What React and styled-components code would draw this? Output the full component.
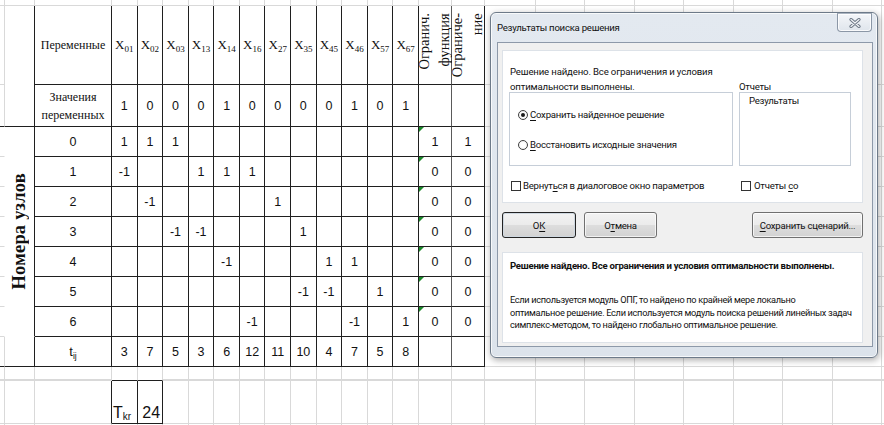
import React from 'react';
import styled, { createGlobalStyle, css } from 'styled-components';

const GRID = '#d9d9d9';
const DARK = '#1f1f1f';
const MID = '#5a5a5a';

const VARS = ['01', '02', '03', '13', '14', '16', '27', '35', '45', '46', '57', '67'];
const VALUES = [1, 0, 0, 0, 1, 0, 0, 0, 0, 1, 0, 1];
const TIMES = [3, 7, 5, 3, 6, 12, 11, 10, 4, 7, 5, 8];
const NODES = [
  { id: 0, coef: { '01': 1, '02': 1, '03': 1 }, fn: 1, limit: 1 },
  { id: 1, coef: { '01': -1, '13': 1, '14': 1, '16': 1 }, fn: 0, limit: 0 },
  { id: 2, coef: { '02': -1, '27': 1 }, fn: 0, limit: 0 },
  { id: 3, coef: { '03': -1, '13': -1, '35': 1 }, fn: 0, limit: 0 },
  { id: 4, coef: { '14': -1, '45': 1, '46': 1 }, fn: 0, limit: 0 },
  { id: 5, coef: { '35': -1, '45': -1, '57': 1 }, fn: 0, limit: 0 },
  { id: 6, coef: { '16': -1, '46': -1, '67': 1 }, fn: 0, limit: 0 },
];
const TAIL_COLUMNS = 9;
const ALL_COLUMNS = 3 + VARS.length + 2 + TAIL_COLUMNS;

const GlobalStyle = createGlobalStyle`
  html, body { margin: 0; padding: 0; background: #ffffff; }
  #root { width: 884px; height: 425px; }
`;

const Stage = styled.main`
  position: relative;
  width: 884px;
  height: 425px;
  overflow: hidden;
  background: #ffffff;
`;

/* ---------- worksheet ---------- */

const Sheet = styled.div`
  display: grid;
  grid-template-columns: 5px 30px 77px repeat(12, 25.583px) 33px 33px 51px repeat(8, 49.5px);
  grid-template-rows: 6px 79px 42px repeat(8, 30px) 14px 43px 10px;
  font-family: "Liberation Sans", Arial, sans-serif;
  font-size: 12.5px;
  color: #111;
`;

const Cell = styled.div`
  position: relative;
  box-sizing: border-box;
  min-width: 0;
  grid-row: span ${p => p.$rows || 1};
  border-right: 1px solid ${p => p.$r || GRID};
  border-bottom: ${p => p.$bw || 1}px solid ${p => p.$b || GRID};
  display: flex;
  align-items: ${p => p.$v || 'center'};
  justify-content: ${p => p.$h || 'center'};
  padding: ${p => p.$pad || '0'};
  white-space: nowrap;
  ${p => p.$flag && css`
    &::before {
      content: '';
      position: absolute;
      left: 0;
      top: 0;
      border-style: solid;
      border-width: 5px 5px 0 0;
      border-color: #1c8a2b transparent transparent transparent;
    }
  `}
`;

const Caption = styled.span`
  font-family: "Liberation Serif", "Times New Roman", serif;
  font-size: 12px;
  line-height: 18px;
  text-align: center;
`;

const VarName = styled.span`
  font-family: "Liberation Serif", "Times New Roman", serif;
  font-size: 13px;
`;

const Sub = styled.sub`
  font-size: ${p => p.$size || 9}px;
  vertical-align: ${p => p.$drop || -3}px;
  line-height: 0;
`;

const Symbol = styled.span`
  font-size: ${p => p.$size || 13}px;
`;

const RotatedHead = styled.span`
  writing-mode: vertical-rl;
  transform: rotate(180deg);
  font-family: "Liberation Serif", "Times New Roman", serif;
  font-size: 14.5px;
  line-height: 19.5px;
  text-align: end;
  margin-top: 7px;
  flex-shrink: 0;
`;

const SideLabel = styled.span`
  writing-mode: vertical-rl;
  transform: rotate(180deg);
  font-family: "Liberation Serif", "Times New Roman", serif;
  font-weight: bold;
  font-size: 18.5px;
  letter-spacing: 0.2px;
`;

function plainRow(prefix, count, props = {}) {
  return Array.from({ length: count }, (_, i) => <Cell key={`${prefix}-${i}`} {...props} />);
}

function buildSheet() {
  const cells = [];

  // thin strip of the row above the table
  cells.push(...plainRow('top', ALL_COLUMNS));

  // header row
  cells.push(<Cell key="h-edge" />);
  cells.push(<Cell key="h-a" $rows={2} $r={DARK} $b={DARK} />);
  cells.push(
    <Cell key="h-b" $r={DARK} $b={DARK}>
      <Caption>Переменные</Caption>
    </Cell>
  );
  VARS.forEach(v =>
    cells.push(
      <Cell key={`h-${v}`} $r={DARK} $b={DARK}>
        <VarName>
          X<Sub>{v}</Sub>
        </VarName>
      </Cell>
    )
  );
  cells.push(
    <Cell key="h-fn" $r={MID} $b={DARK} $v="flex-start">
      <RotatedHead>
        Огранич.
        <br />
        функция
      </RotatedHead>
    </Cell>
  );
  cells.push(
    <Cell key="h-lim" $r={DARK} $b={DARK} $v="flex-start">
      <RotatedHead>
        Ограниче-
        <br />
        ние
      </RotatedHead>
    </Cell>
  );
  cells.push(...plainRow('h-tail', TAIL_COLUMNS));

  // variable values
  cells.push(<Cell key="v-edge" $b={DARK} />);
  cells.push(
    <Cell key="v-b" $r={DARK} $b={DARK}>
      <Caption>
        Значения
        <br />
        переменных
      </Caption>
    </Cell>
  );
  VALUES.forEach((n, i) =>
    cells.push(
      <Cell key={`v-${i}`} $r={DARK} $b={DARK}>
        {n}
      </Cell>
    )
  );
  cells.push(<Cell key="v-fn" $r={MID} $b={DARK} />);
  cells.push(<Cell key="v-lim" $r={DARK} $b={DARK} />);
  cells.push(...plainRow('v-tail', TAIL_COLUMNS));

  // node balance rows
  NODES.forEach(node => {
    cells.push(<Cell key={`n${node.id}-edge`} $r="transparent" />);
    if (node.id === 0) {
      cells.push(
        <Cell key="n-side" $rows={NODES.length} $r={DARK} $b="transparent">
          <SideLabel>Номера узлов</SideLabel>
        </Cell>
      );
    }
    cells.push(
      <Cell key={`n${node.id}-b`} $r={DARK} $b={DARK}>
        {node.id}
      </Cell>
    );
    VARS.forEach(v =>
      cells.push(
        <Cell key={`n${node.id}-${v}`} $r={DARK} $b={DARK}>
          {node.coef[v] ?? ''}
        </Cell>
      )
    );
    cells.push(
      <Cell key={`n${node.id}-fn`} $flag $r={MID} $b={DARK}>
        {node.fn}
      </Cell>
    );
    cells.push(
      <Cell key={`n${node.id}-lim`} $r={DARK} $b={DARK}>
        {node.limit}
      </Cell>
    );
    cells.push(...plainRow(`n${node.id}-tail`, TAIL_COLUMNS));
  });

  // durations
  cells.push(<Cell key="t-edge" $b={DARK} />);
  cells.push(<Cell key="t-a" $r={DARK} $b={DARK} />);
  cells.push(
    <Cell key="t-b" $r={DARK} $b={DARK}>
      <Symbol>
        t<Sub $size={8.5} $drop={-3}>ij</Sub>
      </Symbol>
    </Cell>
  );
  TIMES.forEach((n, i) =>
    cells.push(
      <Cell key={`t-${i}`} $r={DARK} $b={DARK}>
        {n}
      </Cell>
    )
  );
  cells.push(<Cell key="t-fn" $r={MID} $b={DARK} />);
  cells.push(<Cell key="t-lim" $r={DARK} $b={DARK} />);
  cells.push(...plainRow('t-tail', TAIL_COLUMNS));

  // empty spacer row
  cells.push(...plainRow('gap-a', 3, { $bw: 2 }));
  cells.push(<Cell key="gap-k1" $b={DARK} />);
  cells.push(<Cell key="gap-k2" $b={DARK} />);
  cells.push(...plainRow('gap-b', ALL_COLUMNS - 5, { $bw: 2 }));

  // critical path length
  cells.push(<Cell key="k-edge" />);
  cells.push(<Cell key="k-a" />);
  cells.push(<Cell key="k-b" $r={DARK} />);
  cells.push(
    <Cell key="k-label" $r={DARK} $b={DARK} $v="flex-end" $h="flex-start" $pad="0 0 1px 1px">
      <Symbol $size={16}>
        T<Sub $size={10} $drop={-2}>kr</Sub>
      </Symbol>
    </Cell>
  );
  cells.push(
    <Cell key="k-value" $r={DARK} $b={DARK} $v="flex-end" $h="flex-end" $pad="0 2px 1px 0">
      <Symbol $size={16}>24</Symbol>
    </Cell>
  );
  cells.push(...plainRow('k-tail', ALL_COLUMNS - 5));

  cells.push(...plainRow('end', ALL_COLUMNS));
  return cells;
}

/* ---------- solver results window ---------- */

const Window = styled.section`
  position: absolute;
  left: 490px;
  top: 12px;
  width: 388px;
  height: 346px;
  box-sizing: border-box;
  display: flex;
  flex-direction: column;
  padding: 0 4px 10px 6px;
  border: 1px solid #6d7a89;
  border-radius: 6px;
  background: linear-gradient(#e3e9f0, #dce3eb);
  box-shadow: 1px 2px 7px rgba(0, 0, 0, 0.35), inset 0 0 0 1px rgba(255, 255, 255, 0.75);
  font-family: Roboto, "Liberation Sans", Arial, sans-serif;
  font-size: 9.6px;
  letter-spacing: -0.25px;
  color: #111;
`;

const TitleBar = styled.header`
  height: 29px;
  flex-shrink: 0;
  display: flex;
  justify-content: space-between;
  align-items: flex-start;
`;

const Title = styled.h1`
  margin: 8px 0 0;
  font-size: 9.6px;
  font-weight: normal;
  line-height: 13px;
`;

const CloseButton = styled.button`
  width: 35px;
  height: 19px;
  margin: 0 1px 0 0;
  padding: 0;
  box-sizing: border-box;
  display: flex;
  align-items: center;
  justify-content: center;
  border: 1px solid #8b97a6;
  border-top-color: #aab4c0;
  border-radius: 0 0 4px 4px;
  background: linear-gradient(#f4f6f9, #dfe5ec);
  box-shadow: inset 0 0 0 1px rgba(255, 255, 255, 0.8);
`;

const Client = styled.div`
  flex: 1;
  display: flex;
  flex-direction: column;
  padding: 7px 9px 0 4px;
  border: 1px solid #8d99a9;
  background: #f0f0f0;
`;

const Panel = styled.div`
  box-sizing: border-box;
  border: 1px solid #dde2e8;
  background: #ffffff;
`;

const OptionsPanel = styled(Panel)`
  height: 153px;
  display: grid;
  grid-template-columns: 224px 112px;
  grid-template-rows: 41px 74px 1fr;
  column-gap: 6px;
  padding: 0 0 0 6px;
`;

const Message = styled.p`
  margin: 0;
  padding: 14px 0 0 1px;
  line-height: 14.5px;
  letter-spacing: -0.15px;
  white-space: nowrap;
`;

const ListLabel = styled.span`
  align-self: end;
  line-height: 10px;
`;

const Key = styled.u`
  text-decoration-thickness: 1px;
  text-underline-offset: 1.5px;
`;

const Frame = styled.div`
  box-sizing: border-box;
  border: 1px solid #c6ced8;
`;

const GroupBox = styled(Frame)`
  display: flex;
  flex-direction: column;
  gap: 15px;
  padding: 14px 0 0 8px;
`;

const ReportList = styled(Frame)`
  padding: 1px 0 0 9px;
  line-height: 13px;
`;

const OptionRow = styled.label`
  display: flex;
  align-items: center;
  height: 15px;
  white-space: nowrap;
`;

const CheckRow = styled(OptionRow)`
  align-self: start;
  margin-top: 12px;
  padding-left: 2px;
`;

const Radio = styled.span`
  width: 10px;
  height: 10px;
  box-sizing: border-box;
  margin-right: 2px;
  border: 1px solid #3f3f3f;
  border-radius: 50%;
  background: radial-gradient(circle, #ffffff 40%, #e6e6e6 100%);
  display: flex;
  align-items: center;
  justify-content: center;
  ${p => p.$checked && css`
    &::after {
      content: '';
      width: 4px;
      height: 4px;
      border-radius: 50%;
      background: #1a1a1a;
    }
  `}
`;

const CheckBox = styled.span`
  width: 10px;
  height: 10px;
  box-sizing: border-box;
  margin-right: ${p => p.$gap || 2}px;
  border: 1px solid #333333;
  background: #ffffff;
`;

const ButtonRow = styled.div`
  display: flex;
  gap: 8px;
  margin-top: 9px;
  height: 26px;
`;

const Button = styled.button`
  width: ${p => p.$w}px;
  height: 26px;
  ${p => p.$push && 'margin-left: auto;'}
  padding: 0;
  box-sizing: border-box;
  border: 1px solid ${p => (p.$default ? '#232323' : '#707070')};
  border-radius: 3px;
  background: linear-gradient(#f3f3f3 0%, #ebebeb 48%, #dddddd 52%, #d2d2d2 100%);
  box-shadow: inset 0 0 0 1px ${p => (p.$default ? '#cfd8e0' : 'rgba(255, 255, 255, 0.7)')};
  font: inherit;
  letter-spacing: inherit;
  color: #111;
`;

const InfoPanel = styled(Panel)`
  height: 91px;
  margin-top: 14px;
  padding: 6px 0 0 7px;
`;

const InfoTitle = styled.p`
  margin: 0;
  font-weight: bold;
  line-height: 13px;
  white-space: nowrap;
`;

const InfoText = styled.p`
  margin: 22px 0 0;
  font-size: 9.2px;
  letter-spacing: -0.3px;
  line-height: 12.5px;
  white-space: nowrap;
`;

function CloseGlyph() {
  return (
    <svg width="12" height="10" viewBox="0 0 12 10" aria-hidden="true">
      <path d="M2 1.5 L10 8.5 M10 1.5 L2 8.5" stroke="#6c7785" strokeWidth="3.2" strokeLinecap="round" fill="none" />
      <path d="M2 1.5 L10 8.5 M10 1.5 L2 8.5" stroke="#f4f6f9" strokeWidth="1.2" strokeLinecap="round" fill="none" />
    </svg>
  );
}

function SolverResults() {
  return (
    <Window aria-label="Результаты поиска решения">
      <TitleBar>
        <Title>Результаты поиска решения</Title>
        <CloseButton type="button" aria-label="Закрыть">
          <CloseGlyph />
        </CloseButton>
      </TitleBar>
      <Client>
        <OptionsPanel>
          <Message>
            Решение найдено. Все ограничения и условия
            <br />
            оптимальности выполнены.
          </Message>
          <ListLabel>
            <Key>О</Key>тчеты
          </ListLabel>
          <GroupBox>
            <OptionRow>
              <Radio $checked />
              <span>
                <Key>С</Key>охранить найденное решение
              </span>
            </OptionRow>
            <OptionRow>
              <Radio />
              <span>
                <Key>В</Key>осстановить исходные значения
              </span>
            </OptionRow>
          </GroupBox>
          <ReportList>Результаты</ReportList>
          <CheckRow>
            <CheckBox />
            <span>
              Вернут<Key>ь</Key>ся в диалоговое окно параметров
            </span>
          </CheckRow>
          <CheckRow>
            <CheckBox $gap={3} />
            <span>
              Отчеты <Key>с</Key>о
            </span>
          </CheckRow>
        </OptionsPanel>
        <ButtonRow>
          <Button type="button" $default $w={74}>
            О<Key>К</Key>
          </Button>
          <Button type="button" $w={73}>
            О<Key>т</Key>мена
          </Button>
          <Button type="button" $push $w={111}>
            <Key>С</Key>охранить сценарий...
          </Button>
        </ButtonRow>
        <InfoPanel>
          <InfoTitle>Решение найдено. Все ограничения и условия оптимальности выполнены.</InfoTitle>
          <InfoText>
            Если используется модуль ОПГ, то найдено по крайней мере локально
            <br />
            оптимальное решение. Если используется модуль поиска решений линейных задач
            <br />
            симплекс-методом, то найдено глобально оптимальное решение.
          </InfoText>
        </InfoPanel>
      </Client>
    </Window>
  );
}

export default function App() {
  return (
    <>
      <GlobalStyle />
      <Stage>
        <Sheet>{buildSheet()}</Sheet>
        <SolverResults />
      </Stage>
    </>
  );
}
